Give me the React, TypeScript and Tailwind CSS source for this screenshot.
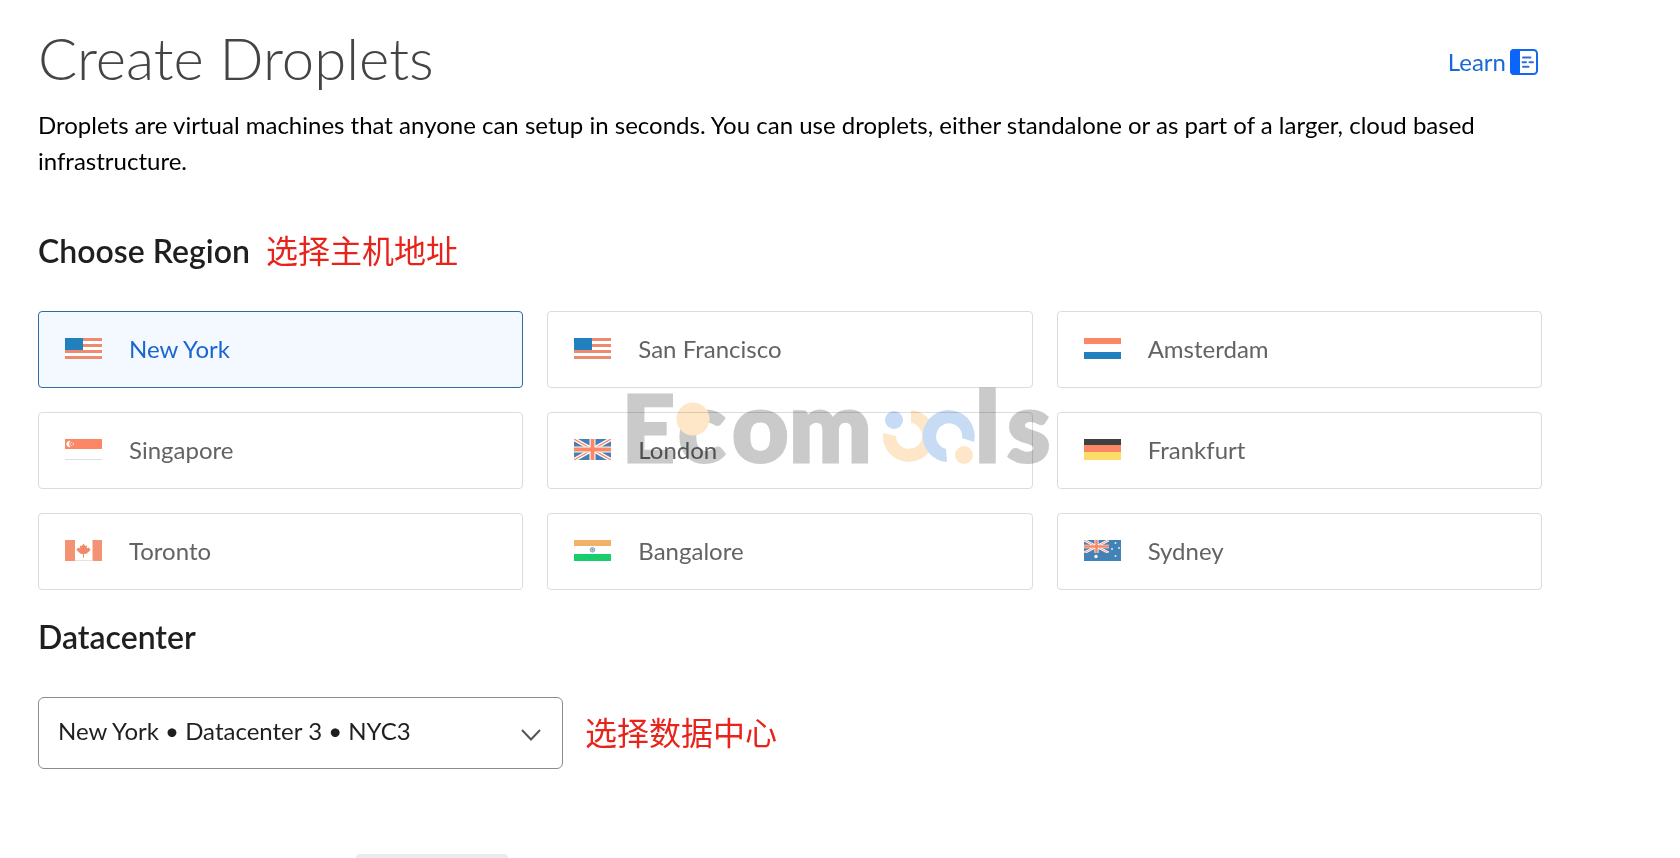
import { useState } from "react";
import type { ReactNode } from "react";

const RED = "#fb8766";
const BLUE = "#2180bd";
const NAVY = "#457fb3";

function UsaFlag() {
  return (
    <g>
      <rect width="37" height="21" fill="#fff" />
      {[0, 6, 12, 18].map((y) => (
        <rect key={y} y={y} width="37" height="3" fill="#ee8a70" />
      ))}
      <rect width="18" height="12" fill={BLUE} />
    </g>
  );
}

function UnionJack() {
  return (
    <g>
      <rect width="37" height="21" fill={NAVY} />
      <path d="M0 0L37 21M37 0L0 21" stroke="#fff" strokeWidth="4" />
      <path d="M0 0L37 21M37 0L0 21" stroke={RED} strokeWidth="1.3" />
      <path d="M18.5 0V21M0 10.5H37" stroke="#fff" strokeWidth="6" />
      <path d="M18.5 0V21M0 10.5H37" stroke={RED} strokeWidth="3.8" />
    </g>
  );
}

const flags: Record<string, ReactNode> = {
  us: <UsaFlag />,
  nl: (
    <g>
      <rect width="37" height="21" fill="#fff" />
      <rect width="37" height="6" fill={RED} />
      <rect y="14" width="37" height="7" fill={BLUE} />
    </g>
  ),
  sg: (
    <g>
      <rect width="37" height="21" fill="#fff" />
      <rect width="37" height="10" fill={RED} />
      <path d="M5.500 1.800A3.300 3.300 0 1 0 5.500 8.200A4.500 4.500 0 0 1 5.500 1.800Z" fill="#fff" />
      <circle cx="6.800" cy="5" r="1.600" fill="none" stroke="#fff" strokeWidth="0.800" strokeDasharray="1.2 0.8" />
      <rect y="20" width="37" height="1" fill="#dedede" />
    </g>
  ),
  gb: <UnionJack />,
  de: (
    <g>
      <rect width="37" height="21" fill="#fbdc68" />
      <rect width="37" height="13" fill={RED} />
      <rect width="37" height="6" fill="#3d4241" />
    </g>
  ),
  ca: (
    <g>
      <rect width="37" height="21" fill="#fff" />
      <rect width="10" height="21" fill="#f39373" />
      <rect x="27.5" width="9.5" height="21" fill="#f39373" />
      <rect x="10" y="20" width="18" height="1" fill="#e6e0de" />
      <path
        d="M18.5 3.5L20.2 6L22 5.5L21.800 8.500L24 7.500L25.500 10L24.500 11L21 14L19 13.800V17.500H18V13.800L16 14L12.500 11L11.500 10L13 7.500L15.200 8.500L15 5.500L16.800 6Z"
        fill="#f08a68"
      />
    </g>
  ),
  in: (
    <g>
      <rect width="37" height="21" fill="#fff" />
      <rect width="37" height="6" fill="#f2b168" />
      <rect y="14" width="37" height="7" fill="#18ce6c" />
      <circle cx="18.5" cy="9.8" r="2.3" fill="#b9cbdc" stroke="#7f9fbd" strokeWidth="0.9" />
      <circle cx="18.5" cy="9.8" r="0.8" fill="#6d8fb0" />
    </g>
  ),
  au: (
    <g>
      <rect width="37" height="21" fill="#4382b6" />
      <svg width="25" height="13" viewBox="0 0 37 21" preserveAspectRatio="none">
        <UnionJack />
      </svg>
      <circle cx="12" cy="16.5" r="1.7" fill="#fff" />
      {[
        [31.5, 3],
        [28, 9],
        [35, 8],
        [31.5, 16],
      ].map(([x, y]) => (
        <circle key={`${x}-${y}`} cx={x} cy={y} r="1" fill="#dcebf5" />
      ))}
    </g>
  ),
};

const regions = [
  { name: "New York", flag: "us" },
  { name: "San Francisco", flag: "us" },
  { name: "Amsterdam", flag: "nl" },
  { name: "Singapore", flag: "sg" },
  { name: "London", flag: "gb" },
  { name: "Frankfurt", flag: "de" },
  { name: "Toronto", flag: "ca" },
  { name: "Bangalore", flag: "in" },
  { name: "Sydney", flag: "au" },
];

function Note({ children }: { children: ReactNode }) {
  return (
    <span
      lang="zh-CN"
      className="pb-1 font-['Noto_Sans_CJK_SC',sans-serif] text-[32px] leading-8 font-normal text-[#e8231b]"
    >
      {children}
    </span>
  );
}

function LearnIcon() {
  return (
    <svg viewBox="0 0 28 26" className="h-[26px] w-7" aria-hidden="true">
      <rect x="1" y="1" width="26" height="24" rx="3.5" fill="#fff" stroke="#1269f0" strokeWidth="2" />
      <path d="M4 0H10V26H4A4 4 0 0 1 0 22V4A4 4 0 0 1 4 0Z" fill="#0a66fb" />
      <path
        d="M13 8.5H20.5M12.500 13.200H16M19.500 13.200H23M13 17.800H18.500"
        stroke="#2b6fe0"
        strokeWidth="2"
        strokeLinecap="round"
      />
    </svg>
  );
}

function Watermark() {
  return (
    <svg
      viewBox="-20 -40 480 150"
      className="pointer-events-none absolute top-1/2 left-1/2 h-[150px] w-[480px] -translate-x-[181px] -translate-y-[101px] mix-blend-multiply"
      aria-hidden="true"
    >
      <g
        fill="#cacaca"
        stroke="#cacaca"
        strokeWidth="3"
        fontFamily="Lato, sans-serif"
        fontWeight="900"
        fontSize="98"
      >
        <text x="-7" y="72" fontSize="92">E</text>
        <text x="49" y="72">c</text>
        <text x="103" y="72">o</text>
        <text x="160" y="72">m</text>
        <text x="346" y="72">l</text>
        <text x="378" y="72">s</text>
      </g>
      <circle cx="64" cy="29" r="16.5" fill="#fde7c8" />
      <path d="M282 20A26 26 0 1 1 254 43L267 46A13 13 0 1 0 282 33Z" fill="#fde7c8" />
      <circle cx="265" cy="30" r="9" fill="#c8dbf5" />
      <path d="M318 72A26 26 0 1 1 345 52L333 48A13 13 0 1 0 317 59Z" fill="#c8dbf5" />
      <circle cx="335" cy="65" r="9" fill="#fde7c8" />
    </svg>
  );
}

export default function App() {
  const [region, setRegion] = useState("New York");

  return (
    <main className="bg-white pr-[138px] pl-[38px] font-['Lato',sans-serif] text-2xl text-black">
      <header className="flex items-center justify-between pt-[22px]">
        <h1 className="text-[58px] leading-[72px] font-light text-[#444]">Create Droplets</h1>
        <a href="#learn" className="flex items-center gap-1 pt-2 pr-1 leading-8 text-[#1a6ad6]">
          Learn
          <LearnIcon />
        </a>
      </header>
      <p className="mt-[13px] leading-9">
        Droplets are virtual machines that anyone can setup in seconds. You can use droplets, either standalone
        or as part of a larger, cloud based infrastructure.
      </p>

      <section className="mt-[54px]">
        <div className="flex items-center gap-4">
          <h2 id="region-title" className="text-[32px] leading-9 font-semibold text-[#1f1f1f]">
            Choose Region
          </h2>
          <Note>选择主机地址</Note>
        </div>
        <div className="relative mt-[42px]">
          <div role="radiogroup" aria-labelledby="region-title" className="grid grid-cols-3 gap-6">
            {regions.map(({ name, flag }) => (
              <label
                key={name}
                className="flex h-[77px] cursor-pointer items-center gap-[27px] rounded border border-[#dcdcdc] bg-white px-[26px] pb-0.5 text-[#636363] has-checked:border-[#2f6ca3] has-checked:bg-[#f4f8ff] has-checked:text-[#1a66d0]"
              >
                <input
                  type="radio"
                  name="region"
                  value={name}
                  checked={region === name}
                  onChange={() => setRegion(name)}
                  className="sr-only"
                />
                <svg viewBox="0 0 37 21" className="h-[21px] w-[37px]" aria-hidden="true">
                  {flags[flag]}
                </svg>
                {name}
              </label>
            ))}
          </div>
          <Watermark />
        </div>
      </section>

      <section className="mt-[29px]">
        <h2 className="text-[32px] leading-9 font-semibold text-[#1f1f1f]">
          <label htmlFor="datacenter">Datacenter</label>
        </h2>
        <div className="mt-[42px] flex items-center gap-[22px]">
          <div className="relative w-[525px]">
            <select
              id="datacenter"
              className="h-[72px] w-full appearance-none rounded-md border border-[#8c8c8c] bg-white pr-16 pb-1 pl-[19px] text-[#1f1f1f]"
            >
              <option>New York • Datacenter 3 • NYC3</option>
            </select>
            <svg
              viewBox="0 0 20 12"
              className="pointer-events-none absolute top-8 right-[22px] h-3 w-5"
              fill="none"
              stroke="#555"
              strokeWidth="2"
              aria-hidden="true"
            >
              <path d="M1 1L10 10.5L19 1" />
            </svg>
          </div>
          <Note>选择数据中心</Note>
        </div>
      </section>

      <div className="mt-[85px] ml-[318px] h-1 w-[152px] rounded-t bg-[#ebebeb]" />
    </main>
  );
}
